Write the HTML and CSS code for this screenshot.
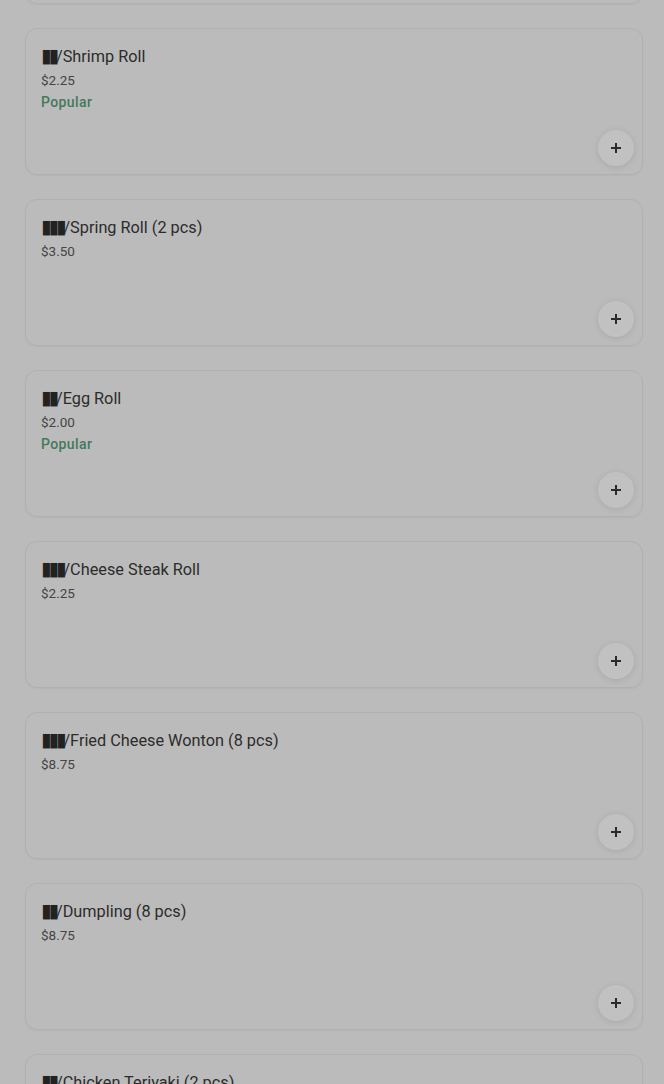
FILE: index.html
```html
<!DOCTYPE html>
<html>
	<head>
		<title>Menu</title>
		<link rel="stylesheet" href="styles.css">
	</head>
	<body>
		<div class="menu">

			<div class="card"></div>

			<div class="card">
				<div class="name"><span class="tofu">▮▮</span>/Shrimp Roll</div>
				<div class="price">$2.25</div>
				<div class="tag">Popular</div>
				<button class="add"><svg viewBox="0 0 12 12"><path d="M6 1v10M1 6h10"/></svg></button>
			</div>

			<div class="card">
				<div class="name"><span class="tofu">▮▮▮</span>/Spring Roll (2 pcs)</div>
				<div class="price">$3.50</div>
				<button class="add"><svg viewBox="0 0 12 12"><path d="M6 1v10M1 6h10"/></svg></button>
			</div>

			<div class="card">
				<div class="name"><span class="tofu">▮▮</span>/Egg Roll</div>
				<div class="price">$2.00</div>
				<div class="tag">Popular</div>
				<button class="add"><svg viewBox="0 0 12 12"><path d="M6 1v10M1 6h10"/></svg></button>
			</div>

			<div class="card">
				<div class="name"><span class="tofu">▮▮▮</span>/Cheese Steak Roll</div>
				<div class="price">$2.25</div>
				<button class="add"><svg viewBox="0 0 12 12"><path d="M6 1v10M1 6h10"/></svg></button>
			</div>

			<div class="card">
				<div class="name"><span class="tofu">▮▮▮</span>/Fried Cheese Wonton (8 pcs)</div>
				<div class="price">$8.75</div>
				<button class="add"><svg viewBox="0 0 12 12"><path d="M6 1v10M1 6h10"/></svg></button>
			</div>

			<div class="card">
				<div class="name"><span class="tofu">▮▮</span>/Dumpling (8 pcs)</div>
				<div class="price">$8.75</div>
				<button class="add"><svg viewBox="0 0 12 12"><path d="M6 1v10M1 6h10"/></svg></button>
			</div>

			<div class="card">
				<div class="name"><span class="tofu">▮▮</span>/Chicken Teriyaki (2 pcs)</div>
				<div class="price">$9.25</div>
				<button class="add"><svg viewBox="0 0 12 12"><path d="M6 1v10M1 6h10"/></svg></button>
			</div>

		</div>
	</body>
</html>
```

FILE: styles.css
```css
	body
	{
		margin: 0;
		background-color: #bbbbbb;
		font-family: Roboto, "Liberation Sans", sans-serif;
		overflow: hidden;
	}

	.menu
	{
		display: flex;
		flex-direction: column;
		gap: 24.5px;
		margin-top: -143px;
		padding: 0 21px 0 25px;
	}

	.card
	{
		box-sizing: border-box;
		height: 146.5px;
		display: flex;
		flex-direction: column;
		align-items: flex-start;
		padding: 16px 8px 8px 15px;
		border: 1px solid #b0b0b0;
		border-radius: 12px;
		box-shadow: 0 1px 2px rgba(0, 0, 0, 0.04);
	}

	.name
	{
		font-size: 16.3px;
		line-height: 24px;
		color: #2c2c2c;
	}

	.tofu
	{
		font-family: "DejaVu Sans", sans-serif;
		font-size: 19px;
		line-height: 16px;
		letter-spacing: -3px;
		color: #222;
	}

	.price
	{
		font-size: 13.5px;
		line-height: 22px;
		color: #454545;
	}

	.tag
	{
		font-size: 14px;
		line-height: 22px;
		font-weight: 500;
		letter-spacing: 0.4px;
		color: #43795c;
	}

	.add
	{
		margin-top: auto;
		align-self: flex-end;
		width: 36px;
		height: 36px;
		padding: 0;
		border: 0;
		border-radius: 50%;
		background-color: #c1c1c1;
		box-shadow: 0 1px 6px rgba(0, 0, 0, 0.1);
		display: flex;
		align-items: center;
		justify-content: center;
	}

	.add svg
	{
		width: 12px;
		height: 12px;
		stroke: #2a2a2a;
		stroke-width: 2;
		fill: none;
	}
```
